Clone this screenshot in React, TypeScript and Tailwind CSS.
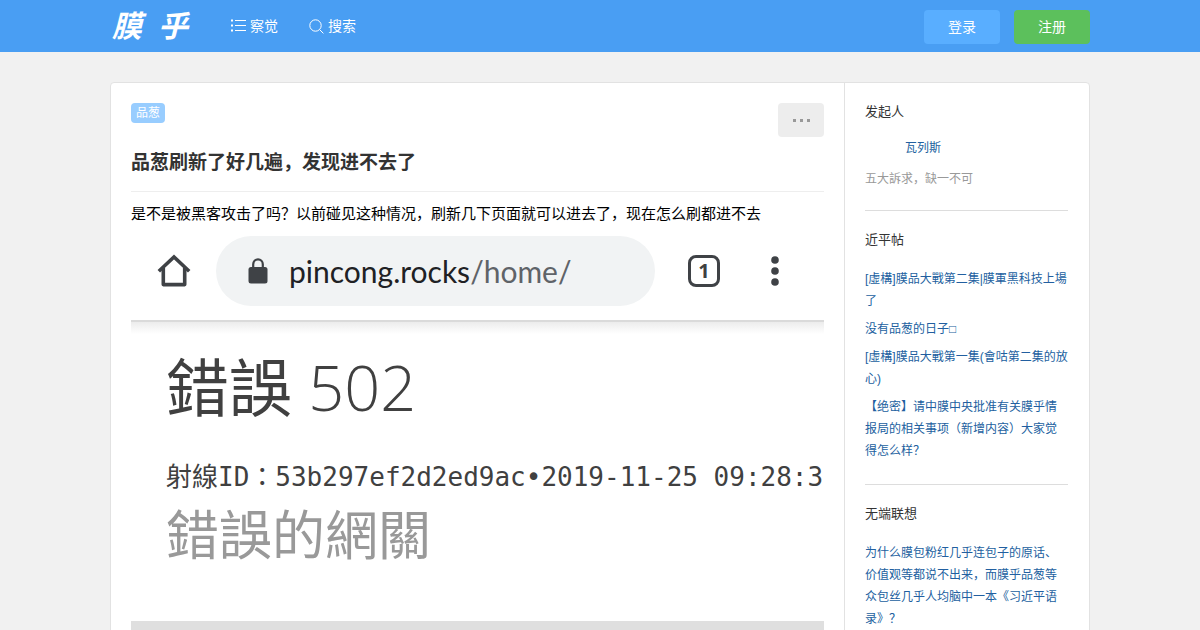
import type { ReactNode } from 'react';

const recentPosts = [
  '[虛構]膜品大戰第二集|膜軍黑科技上場了',
  '没有品葱的日子□',
  '[虛構]膜品大戰第一集(會咕第二集的放心)',
  '【绝密】请中膜中央批准有关膜乎情报局的相关事项（新增内容）大家觉得怎么样？',
];

const relatedPosts = [
  '为什么膜包粉红几乎连包子的原话、价值观等都说不出来，而膜乎品葱等众包丝几乎人均脑中一本《习近平语录》？',
];

function ListIcon() {
  return (
    <svg width="15" height="14" viewBox="0 0 15 14" fill="none" stroke="currentColor" aria-hidden="true">
      <path d="M4 1.5h11M4 6.5h11M4 11.5h11" />
      <path d="M0 1.5h2M0 6.5h2M0 11.5h2" strokeWidth="2" />
    </svg>
  );
}

function SearchIcon() {
  return (
    <svg width="15" height="15" viewBox="0 0 15 15" fill="none" stroke="currentColor" aria-hidden="true">
      <circle cx="6.5" cy="6.5" r="5.7" />
      <path d="M10.7 10.7l3.7 3.7" />
    </svg>
  );
}

function HomeIcon() {
  return (
    <svg width="34" height="34" viewBox="0 0 34 34" fill="none" stroke="#3f4246" strokeWidth="3.6" aria-hidden="true">
      <path d="M1.8 17.2L17 3l15.2 14.2" />
      <path d="M6.3 14v16.6h21.4V14" strokeLinejoin="round" />
    </svg>
  );
}

function LockIcon() {
  return (
    <svg width="20" height="26" viewBox="0 0 20 26" fill="none" aria-hidden="true">
      <rect x="0.5" y="9" width="19" height="16.5" rx="2.5" fill="#3f4246" />
      <path d="M5.2 10V6.2a4.8 4.8 0 0 1 9.6 0V10" stroke="#3f4246" strokeWidth="2.2" />
    </svg>
  );
}

function DotsIcon() {
  return (
    <svg width="8" height="30" viewBox="0 0 8 30" fill="#3f4246" aria-hidden="true">
      <circle cx="4" cy="4" r="3.8" />
      <circle cx="4" cy="15" r="3.8" />
      <circle cx="4" cy="26" r="3.8" />
    </svg>
  );
}

function Header() {
  return (
    <header className="bg-[#499ef3] text-white">
      <div className="mx-auto flex h-[52px] max-w-[980px] items-center pt-0.5">
        <a href="#" className="flex w-[121px] gap-4 pl-0.5 text-[30px] leading-[48px] font-bold italic">
          <span>膜</span>
          <span>乎</span>
        </a>
        <nav className="flex gap-[31px] pb-0.5 text-sm">
          <a href="#" className="flex items-center gap-1">
            <ListIcon />
            察觉
          </a>
          <a href="#" className="flex items-center gap-1">
            <SearchIcon />
            搜索
          </a>
        </nav>
        <div className="ml-auto flex gap-3.5 text-sm">
          <button className="h-[34px] rounded bg-[#59aeff] px-6">登录</button>
          <button className="h-[34px] rounded bg-[#5cc05c] px-6">注册</button>
        </div>
      </div>
    </header>
  );
}

// Phone browser showing the gateway error
function ErrorShot() {
  return (
    <figure className="overflow-hidden whitespace-nowrap text-[#404040]">
      <div className="flex h-[92px] items-center border-b-2 border-[#dadada] px-[26px] pb-3 pt-1">
        <HomeIcon />
        <div className="ml-[25px] flex h-[70px] w-[439px] items-center gap-[21px] rounded-full bg-[#f1f3f4] pl-8 font-[Lato] text-[30px] text-[#202124]">
          <LockIcon />
          <div>
            pincong.rocks<span className="text-[#5f6368]">/home/</span>
          </div>
        </div>
        <div className="ml-[33px] flex size-8 items-center justify-center rounded-lg border-[3px] border-[#3f4246] font-['Open_Sans'] text-xl font-bold">
          1
        </div>
        <div className="ml-auto pr-[19px]">
          <DotsIcon />
        </div>
      </div>
      <div className="h-3 bg-gradient-to-b from-[#ececec] to-white" />
      <div className="pl-[35px]">
        <div className="mt-0.5 font-['Open_Sans','Noto_Sans_CJK_TC',sans-serif] text-[63px] leading-[102px] font-light">
          <span className="font-normal">錯誤</span> 502
        </div>
        <div className="mt-4 font-['DejaVu_Sans_Mono','Noto_Sans_CJK_TC',monospace] text-[26px] leading-[46px]">
          射線ID：53b297ef2d2ed9ac•2019-11-25 09:28:3
        </div>
        <div className="font-['Noto_Sans_CJK_TC',sans-serif] text-[53px] leading-[64px] text-[#999]">錯誤的網關</div>
      </div>
      <div className="mt-[57px] h-20 bg-[#dfdfdf]" />
    </figure>
  );
}

function SideSection({ title, children }: { title: string; children: ReactNode }) {
  return (
    <section className="border-b border-[#ddd] pb-5 last:border-0">
      <h3 className="pt-[18px] text-[13px] leading-[22px] text-[#333]">{title}</h3>
      {children}
    </section>
  );
}

function PostLinks({ posts }: { posts: string[] }) {
  return (
    <ul className="mt-[17px] space-y-1.5 pb-0.5">
      {posts.map((post) => (
        <li key={post}>
          <a href="#" className="text-[#225fa0]">
            {post}
          </a>
        </li>
      ))}
    </ul>
  );
}

export default function App() {
  return (
    <div className="min-h-screen bg-[#f1f1f1] font-['Liberation_Sans','Noto_Sans_CJK_SC',sans-serif]">
      <Header />
      <div className="mx-auto mt-[30px] flex max-w-[980px] rounded-sm border border-[#e2e2e2] bg-white">
        <main className="min-w-0 flex-1 p-5">
          <div className="flex items-start justify-between">
            <a href="#" className="rounded bg-[#98cdff] px-[5px] text-xs leading-5 text-white">
              品葱
            </a>
            <button aria-label="更多" className="flex h-[34px] w-[46px] items-center justify-center gap-1 rounded bg-[#ededed]">
              <span className="size-[3px] bg-[#999]" />
              <span className="size-[3px] bg-[#999]" />
              <span className="size-[3px] bg-[#999]" />
            </button>
          </div>
          <h1 className="mt-3 border-b border-[#eee] pb-3.5 text-[19px] leading-7 font-bold text-[#333]">
            品葱刷新了好几遍，发现进不去了
          </h1>
          <p className="mt-2.5 mb-1 text-[15px] leading-6 text-black">
            是不是被黑客攻击了吗？以前碰见这种情况，刷新几下页面就可以进去了，现在怎么刷都进不去
          </p>
          <ErrorShot />
        </main>

        <aside className="w-[245px] shrink-0 border-l border-[#e2e2e2] pr-[21px] pl-5 text-xs leading-[22px]">
          <SideSection title="发起人">
            <div className="mt-3.5 pl-10">
              <a href="#" className="text-[#225fa0]">
                瓦列斯
              </a>
            </div>
            <p className="mt-[9px] text-[#999]">五大訴求，缺一不可</p>
          </SideSection>
          <SideSection title="近平帖">
            <PostLinks posts={recentPosts} />
          </SideSection>
          <SideSection title="无端联想">
            <PostLinks posts={relatedPosts} />
          </SideSection>
        </aside>
      </div>
    </div>
  );
}
